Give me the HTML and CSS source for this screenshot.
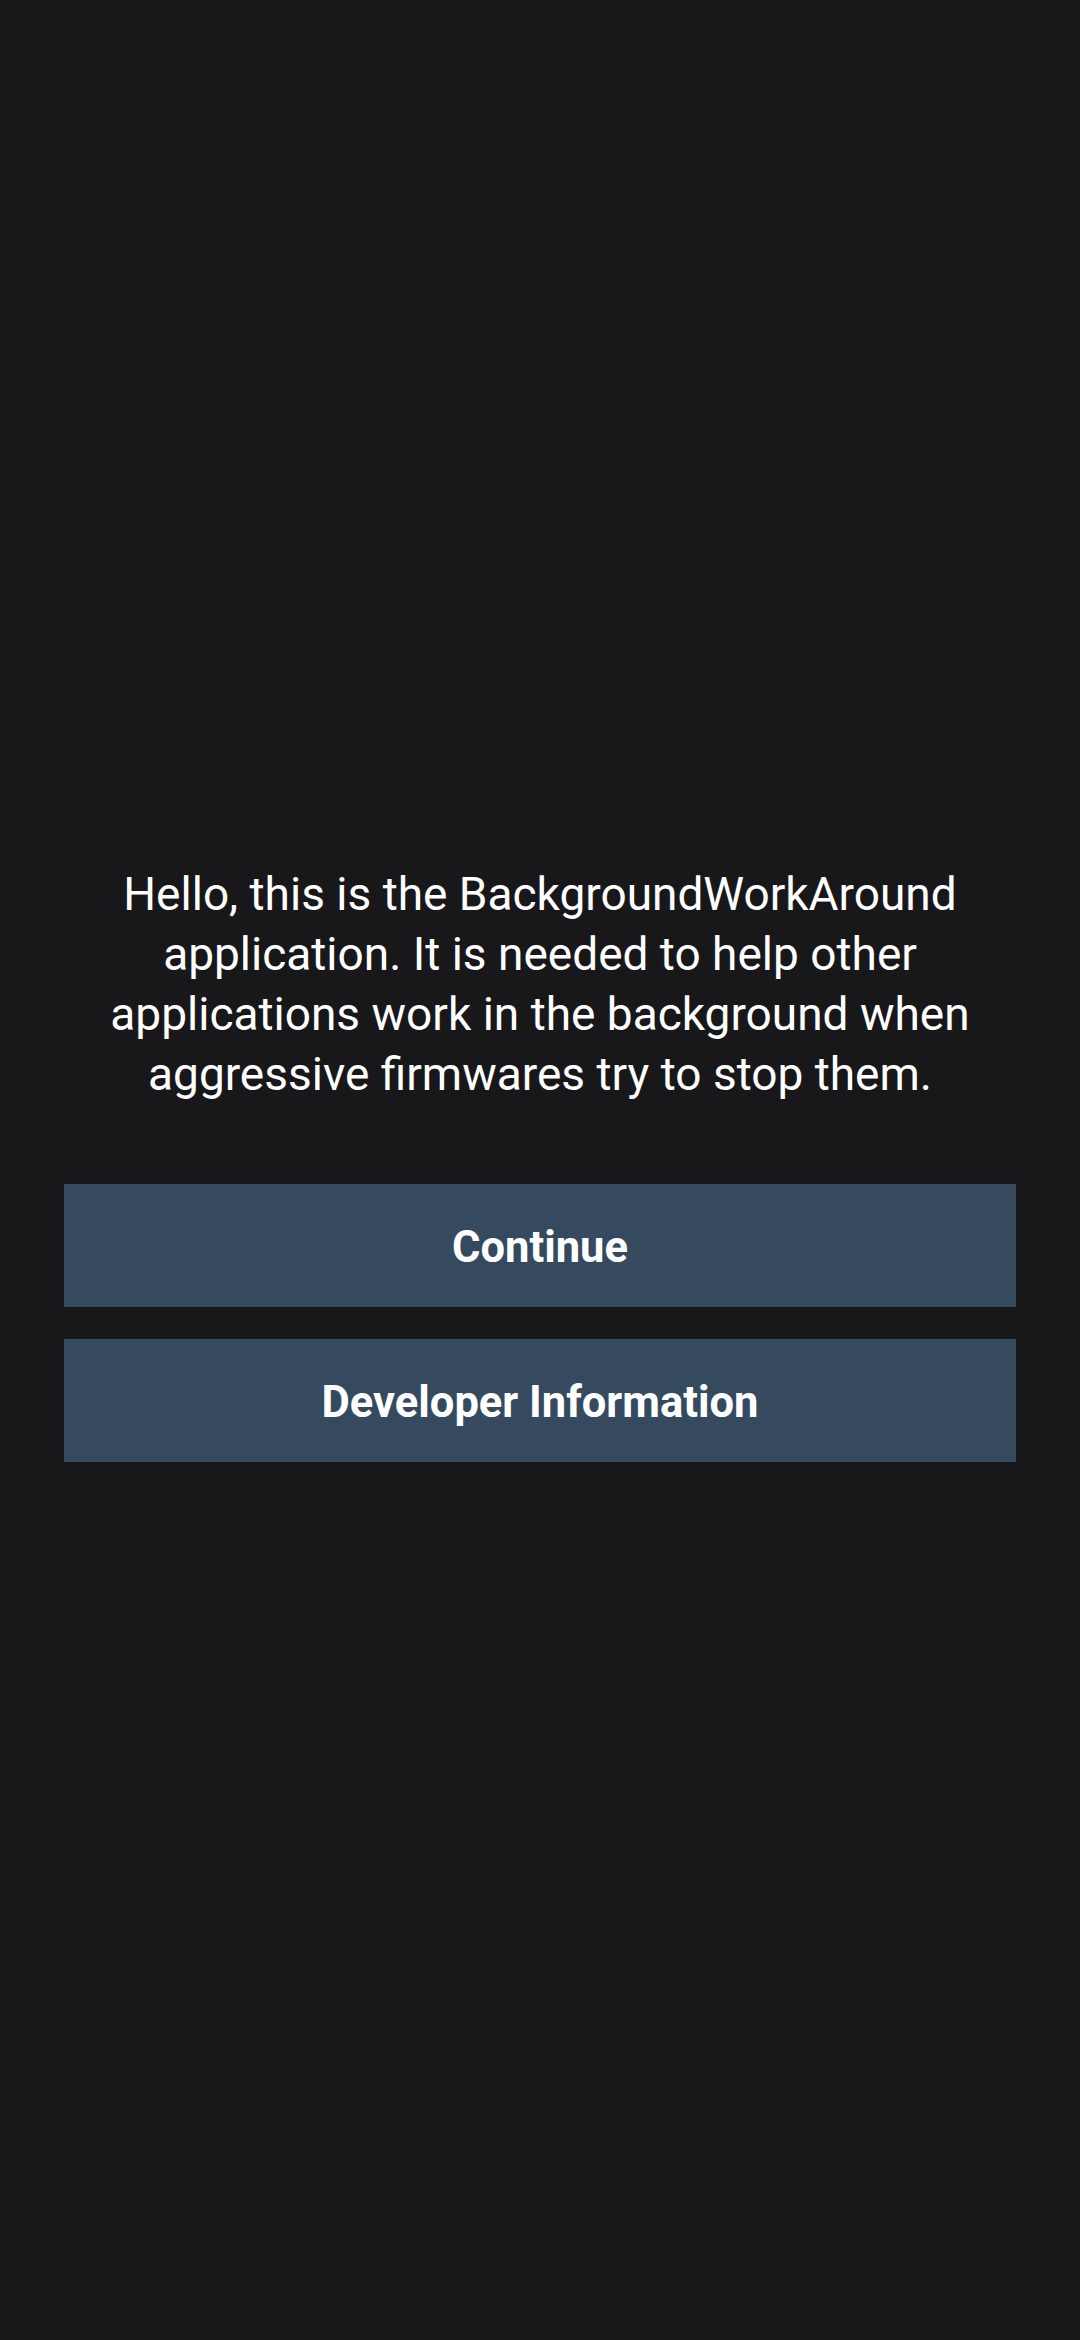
FILE: index.html
```html
<!DOCTYPE html>
<html lang="en">
<head>
<meta charset="utf-8">
<meta name="viewport" content="width=1080">
<title>BackgroundWorkAround</title>
<link rel="stylesheet" href="styles.css">
</head>
<body>
<main class="screen">
  <p class="intro">Hello, this is the BackgroundWorkAround<br>application. It is needed to help other<br>applications work in the background when<br>aggressive firmwares try to stop them.</p>
  <div class="actions">
    <button class="btn" type="button">Continue</button>
    <button class="btn" type="button">Developer Information</button>
  </div>
</main>
</body>
</html>
```
FILE: styles.css
```css
html, body {
  margin: 0;
  padding: 0;
  background: #18181a;
}
body {
  width: 1080px;
  height: 2340px;
  font-family: Roboto, "Noto Sans", sans-serif;
  color: #ffffff;
}
.screen {
  display: flex;
  flex-direction: column;
  padding: 864px 64px 0;
}
.intro {
  margin: 0;
  text-align: center;
  font-size: 46px;
  line-height: 60px;
  font-weight: 400;
}
.actions {
  display: flex;
  flex-direction: column;
  gap: 32px;
  margin-top: 80px;
}
.btn {
  height: 123px;
  border: none;
  border-radius: 0;
  background: #354a5f;
  color: #ffffff;
  font-family: Roboto, "Noto Sans", sans-serif;
  font-size: 43.5px;
  font-weight: 700;
  padding: 4px 0 0;
}
```
